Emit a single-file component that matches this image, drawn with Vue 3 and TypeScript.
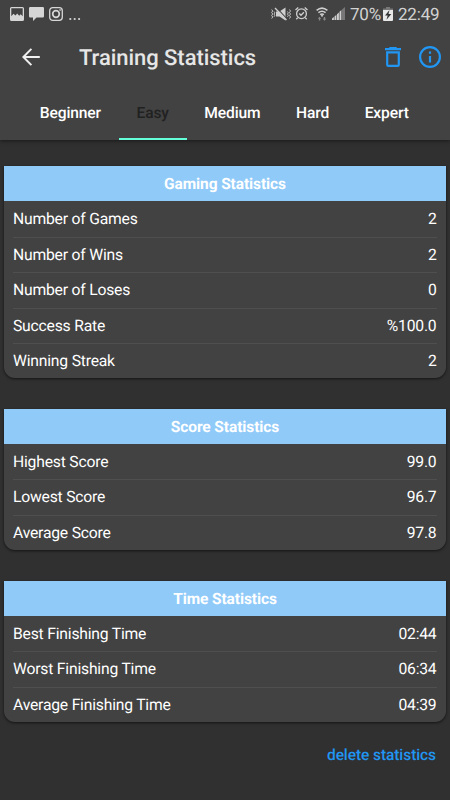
<script setup lang="ts">
interface Stat {
  label: string
  value: string
}
interface Section {
  title: string
  rows: Stat[]
}

const tabs: string[] = ['Beginner', 'Easy', 'Medium', 'Hard', 'Expert']
const activeTab = 'Easy'

const sections: Section[] = [
  {
    title: 'Gaming Statistics',
    rows: [
      { label: 'Number of Games', value: '2' },
      { label: 'Number of Wins', value: '2' },
      { label: 'Number of Loses', value: '0' },
      { label: 'Success Rate', value: '%100.0' },
      { label: 'Winning Streak', value: '2' },
    ],
  },
  {
    title: 'Score Statistics',
    rows: [
      { label: 'Highest Score', value: '99.0' },
      { label: 'Lowest Score', value: '96.7' },
      { label: 'Average Score', value: '97.8' },
    ],
  },
  {
    title: 'Time Statistics',
    rows: [
      { label: 'Best Finishing Time', value: '02:44' },
      { label: 'Worst Finishing Time', value: '06:34' },
      { label: 'Average Finishing Time', value: '04:39' },
    ],
  },
]
</script>

<template>
  <div class="screen">
    <header class="top">
      <div class="status">
        <div class="status-left">
          <svg width="14" height="14" viewBox="0 0 14 14">
            <path fill="#d6d6d6" fill-rule="evenodd" d="M1.5 0h11A1.5 1.5 0 0 1 14 1.5v11a1.5 1.5 0 0 1-1.5 1.5h-11A1.5 1.5 0 0 1 0 12.5v-11A1.5 1.5 0 0 1 1.5 0zM1.3 1.3v8l2.200-2.500 2 1.800 1.700-2.200 2 2.400 1.500-1.500 2 2V1.300z" />
          </svg>
          <svg width="15" height="14" viewBox="0 0 15 14">
            <path fill="#d6d6d6" d="M1.200 0h12.600Q15 0 15 1.200v8Q15 10.400 13.800 10.400H7.500L4 14v-3.600H1.200Q0 10.400 0 9.200v-8Q0 0 1.200 0z" />
          </svg>
          <svg width="14" height="14" viewBox="0 0 14 14" fill="none" stroke="#d6d6d6">
            <rect x=".7" y=".7" width="12.600" height="12.600" rx="3" stroke-width="1.300" />
            <circle cx="7" cy="7" r="3.300" stroke-width="1.700" />
            <path d="M10.400 3h1.400" stroke-width="1.400" />
          </svg>
          <svg class="dots" width="12" height="14" viewBox="0 0 12 14" fill="#d6d6d6">
            <circle cx="1.300" cy="12" r="1.100" />
            <circle cx="5.700" cy="12" r="1.100" />
            <circle cx="10.100" cy="12" r="1.100" />
          </svg>
        </div>
        <div class="status-right">
          <svg class="mute" width="20" height="14" viewBox="0 0 20 14" fill="none" stroke="#cfcfcf">
            <path fill="#cfcfcf" stroke="none" d="M5 4.500h3.500L14.500 0.500v13L8.500 9.500H5z" />
            <path stroke="#424242" stroke-width="1.200" d="M5.500 0.700l11 12" />
            <path stroke-width="1.300" d="M4 1l11.500 12" />
            <path d="M.7 2.500l1 1.500-1 1.500 1 1.500-1 1.500 1 1.500-1 1.500M3 4.500l.8 1.300L3 7l.8 1.300-.8 1.500M16.500 4.500l.8 1.300-.8 1.200.8 1.300-.8 1.500M18.500 2.500l1 1.500-1 1.500 1 1.500-1 1.500 1 1.500-1 1.500" stroke-width=".9" />
          </svg>
          <svg class="alarm" width="13" height="13" viewBox="0 0 13 13" fill="none" stroke="#cfcfcf" stroke-width="1.300">
            <circle cx="6.500" cy="6.700" r="4.900" />
            <path d="M4.300 6.500l1.700 1.700 2.900-3M.5 3.100L3.300.500M12.500 3.100L9.700.500M2.800 10.600l-1.500 1.700M10.200 10.600l1.500 1.700" />
          </svg>
          <svg class="wifi" width="12" height="14" viewBox="0 0 12 14" fill="none" stroke="#cfcfcf" stroke-width="1.500">
            <path d="M.6 3.400Q6-1.200 11.400 3.400M2.400 5.600Q6 2.700 9.600 5.600M4.100 7.600Q6 6.200 7.900 7.600" />
            <circle cx="6" cy="8.800" r="1" fill="#cfcfcf" stroke="none" />
            <path fill="#8a8a8a" stroke="none" d="M3.500 9.800l1.800 2H4.200V13.500H2.900v-1.700H1.800zM8.500 13.700l-1.700-2h1V10h1.400v1.700h1z" />
          </svg>
          <svg class="signal" width="13" height="13" viewBox="0 0 13 13">
            <path fill="#cfcfcf" d="M0 11.500L1.900 10v3H0zM2.500 9.500L4.400 7.800V13H2.500zM5 7.300L6.900 5.500V13H5zM7.500 4.800L9.400 3v10H7.500z" />
            <path fill="#777" d="M10 2.500L13 0v13h-3z" />
          </svg>
          <span class="pct">70%</span>
          <svg class="battery" width="10" height="14" viewBox="0 0 10 14">
            <path fill="#777" d="M3 0h4v1.500h3V4H0V1.500h3z" />
            <path fill="#e8e8e8" d="M0 3h10v10q0 1-1 1H1q-1 0-1-1z" />
            <path fill="#333" d="M6.500 3L2 8.600h2.700L3.500 12.800 8.300 7H5.500z" />
          </svg>
          <span class="clock">22:49</span>
        </div>
      </div>
      <div class="bar">
        <svg class="back" width="18" height="18" viewBox="0 0 18 18" fill="none" stroke="#efefef" stroke-width="2">
          <path d="M17.800 9H1.500M9.400.900L1.400 9l8 8.100" />
        </svg>
        <h1>Training Statistics</h1>
        <svg class="trash" width="16" height="20" viewBox="0 0 16 20" fill="#2196f3">
          <path fill-rule="evenodd" d="M4.800 0h6.400l1 1.100H16v2.100H0V1.100h3.800zM1.100 4.300h13.800v13.500q0 2.200-2.200 2.200H3.300q-2.200 0-2.200-2.200zM3.300 6.500v11.300h9.400V6.500z" />
        </svg>
        <svg class="info" width="22" height="22" viewBox="0 0 22 22">
          <circle cx="11" cy="11" r="9.900" fill="none" stroke="#2196f3" stroke-width="2.200" />
          <path fill="#2196f3" d="M9.900 5.500h2.200v2.200H9.900zM9.900 9.900h2.200v6.600H9.900z" />
        </svg>
      </div>
      <nav class="tabs">
        <div v-for="tab in tabs" :key="tab" class="tab" :class="{ active: tab === activeTab }">{{ tab }}</div>
      </nav>
    </header>
    <main>
      <section v-for="section in sections" :key="section.title" class="card">
        <h2>{{ section.title }}</h2>
        <div class="rows">
          <div v-for="row in section.rows" :key="row.label" class="row">
            <span>{{ row.label }}</span>
            <span>{{ row.value }}</span>
          </div>
        </div>
      </section>
      <button class="delete">delete statistics</button>
    </main>
  </div>
</template>

<style>
body {
  margin: 0;
  background: #303030;
}
</style>

<style scoped>
.screen {
  width: 450px;
  height: 800px;
  overflow: hidden;
  background: #303030;
  color: #fff;
  font-family: Roboto, sans-serif;
  text-rendering: geometricPrecision;
}
.top {
  height: 140px;
  background: #424242;
  box-shadow: 0 1px 4px rgba(0, 0, 0, 0.5);
}
.status {
  display: flex;
  justify-content: space-between;
  height: 27px;
  padding: 0 11px 0 10px;
  box-sizing: border-box;
}
.status-left,
.status-right {
  display: flex;
  align-items: center;
}
.status-left {
  gap: 5px;
}
.dots {
  margin-left: 1px;
}
.status-right {
  color: #d2d2d2;
  font-size: 17px;
  line-height: 27px;
}
.mute {
  margin-right: 4px;
}
.alarm {
  margin-right: 8px;
}
.wifi {
  margin-right: 4px;
}
.signal {
  margin-right: 5px;
}
.pct {
  width: 30px;
  margin-right: 3px;
  letter-spacing: -0.2px;
}
.battery {
  margin-right: 5px;
}
.clock {
  width: 41px;
  letter-spacing: -0.2px;
}
.pct,
.clock {
  padding-top: 3px;
  white-space: nowrap;
}
.bar {
  display: flex;
  align-items: center;
  height: 60px;
  padding: 0 9px 0 22px;
}
h1 {
  flex: 1;
  margin: 3px 0 0 39px;
  font-size: 22px;
  letter-spacing: -0.050px;
  font-weight: 500;
  line-height: 28px;
  color: #e6e6e6;
  white-space: nowrap;
}
.trash {
  margin-right: 18px;
}
.tabs {
  display: flex;
  height: 53px;
  padding-left: 22px;
}
.tab {
  box-sizing: border-box;
  padding: 0 17.750px;
  font-size: 15.600px;
  letter-spacing: -0.130px;
  font-weight: 500;
  line-height: 52.500px;
  white-space: nowrap;
}
.tab.active {
  color: #212121;
  border-bottom: 2px solid #64ffda;
}
main {
  display: flex;
  flex-direction: column;
  padding: 26.200px 4px 0;
}
.card {
  margin-bottom: 30.500px;
  background: #424242;
  border-radius: 0 0 11px 11px;
  box-shadow: 0 1px 3px rgba(0, 0, 0, 0.6);
}
h2 {
  margin: 0;
  height: 35px;
  background: #90caf9;
  font-size: 15.500px;
  letter-spacing: -0.100px;
  font-weight: 700;
  line-height: 36px;
  text-align: center;
}
.rows {
  padding: 0 9px;
}
.row {
  display: flex;
  justify-content: space-between;
  height: 35.450px;
  padding-right: 0.500px;
  box-sizing: border-box;
  font-size: 15.700px;
  letter-spacing: -0.200px;
  line-height: 33.800px;
}
.row + .row {
  border-top: 1px solid #4f4f4f;
}
.row:first-child {
  line-height: 35.200px;
}
.delete {
  align-self: flex-end;
  margin: -7px 10px 0 0;
  padding: 0;
  border: 0;
  background: none;
  color: #2196f3;
  font: 500 15.500px/18px Roboto, sans-serif;
  letter-spacing: -0.080px;
  text-rendering: inherit;
}
</style>
